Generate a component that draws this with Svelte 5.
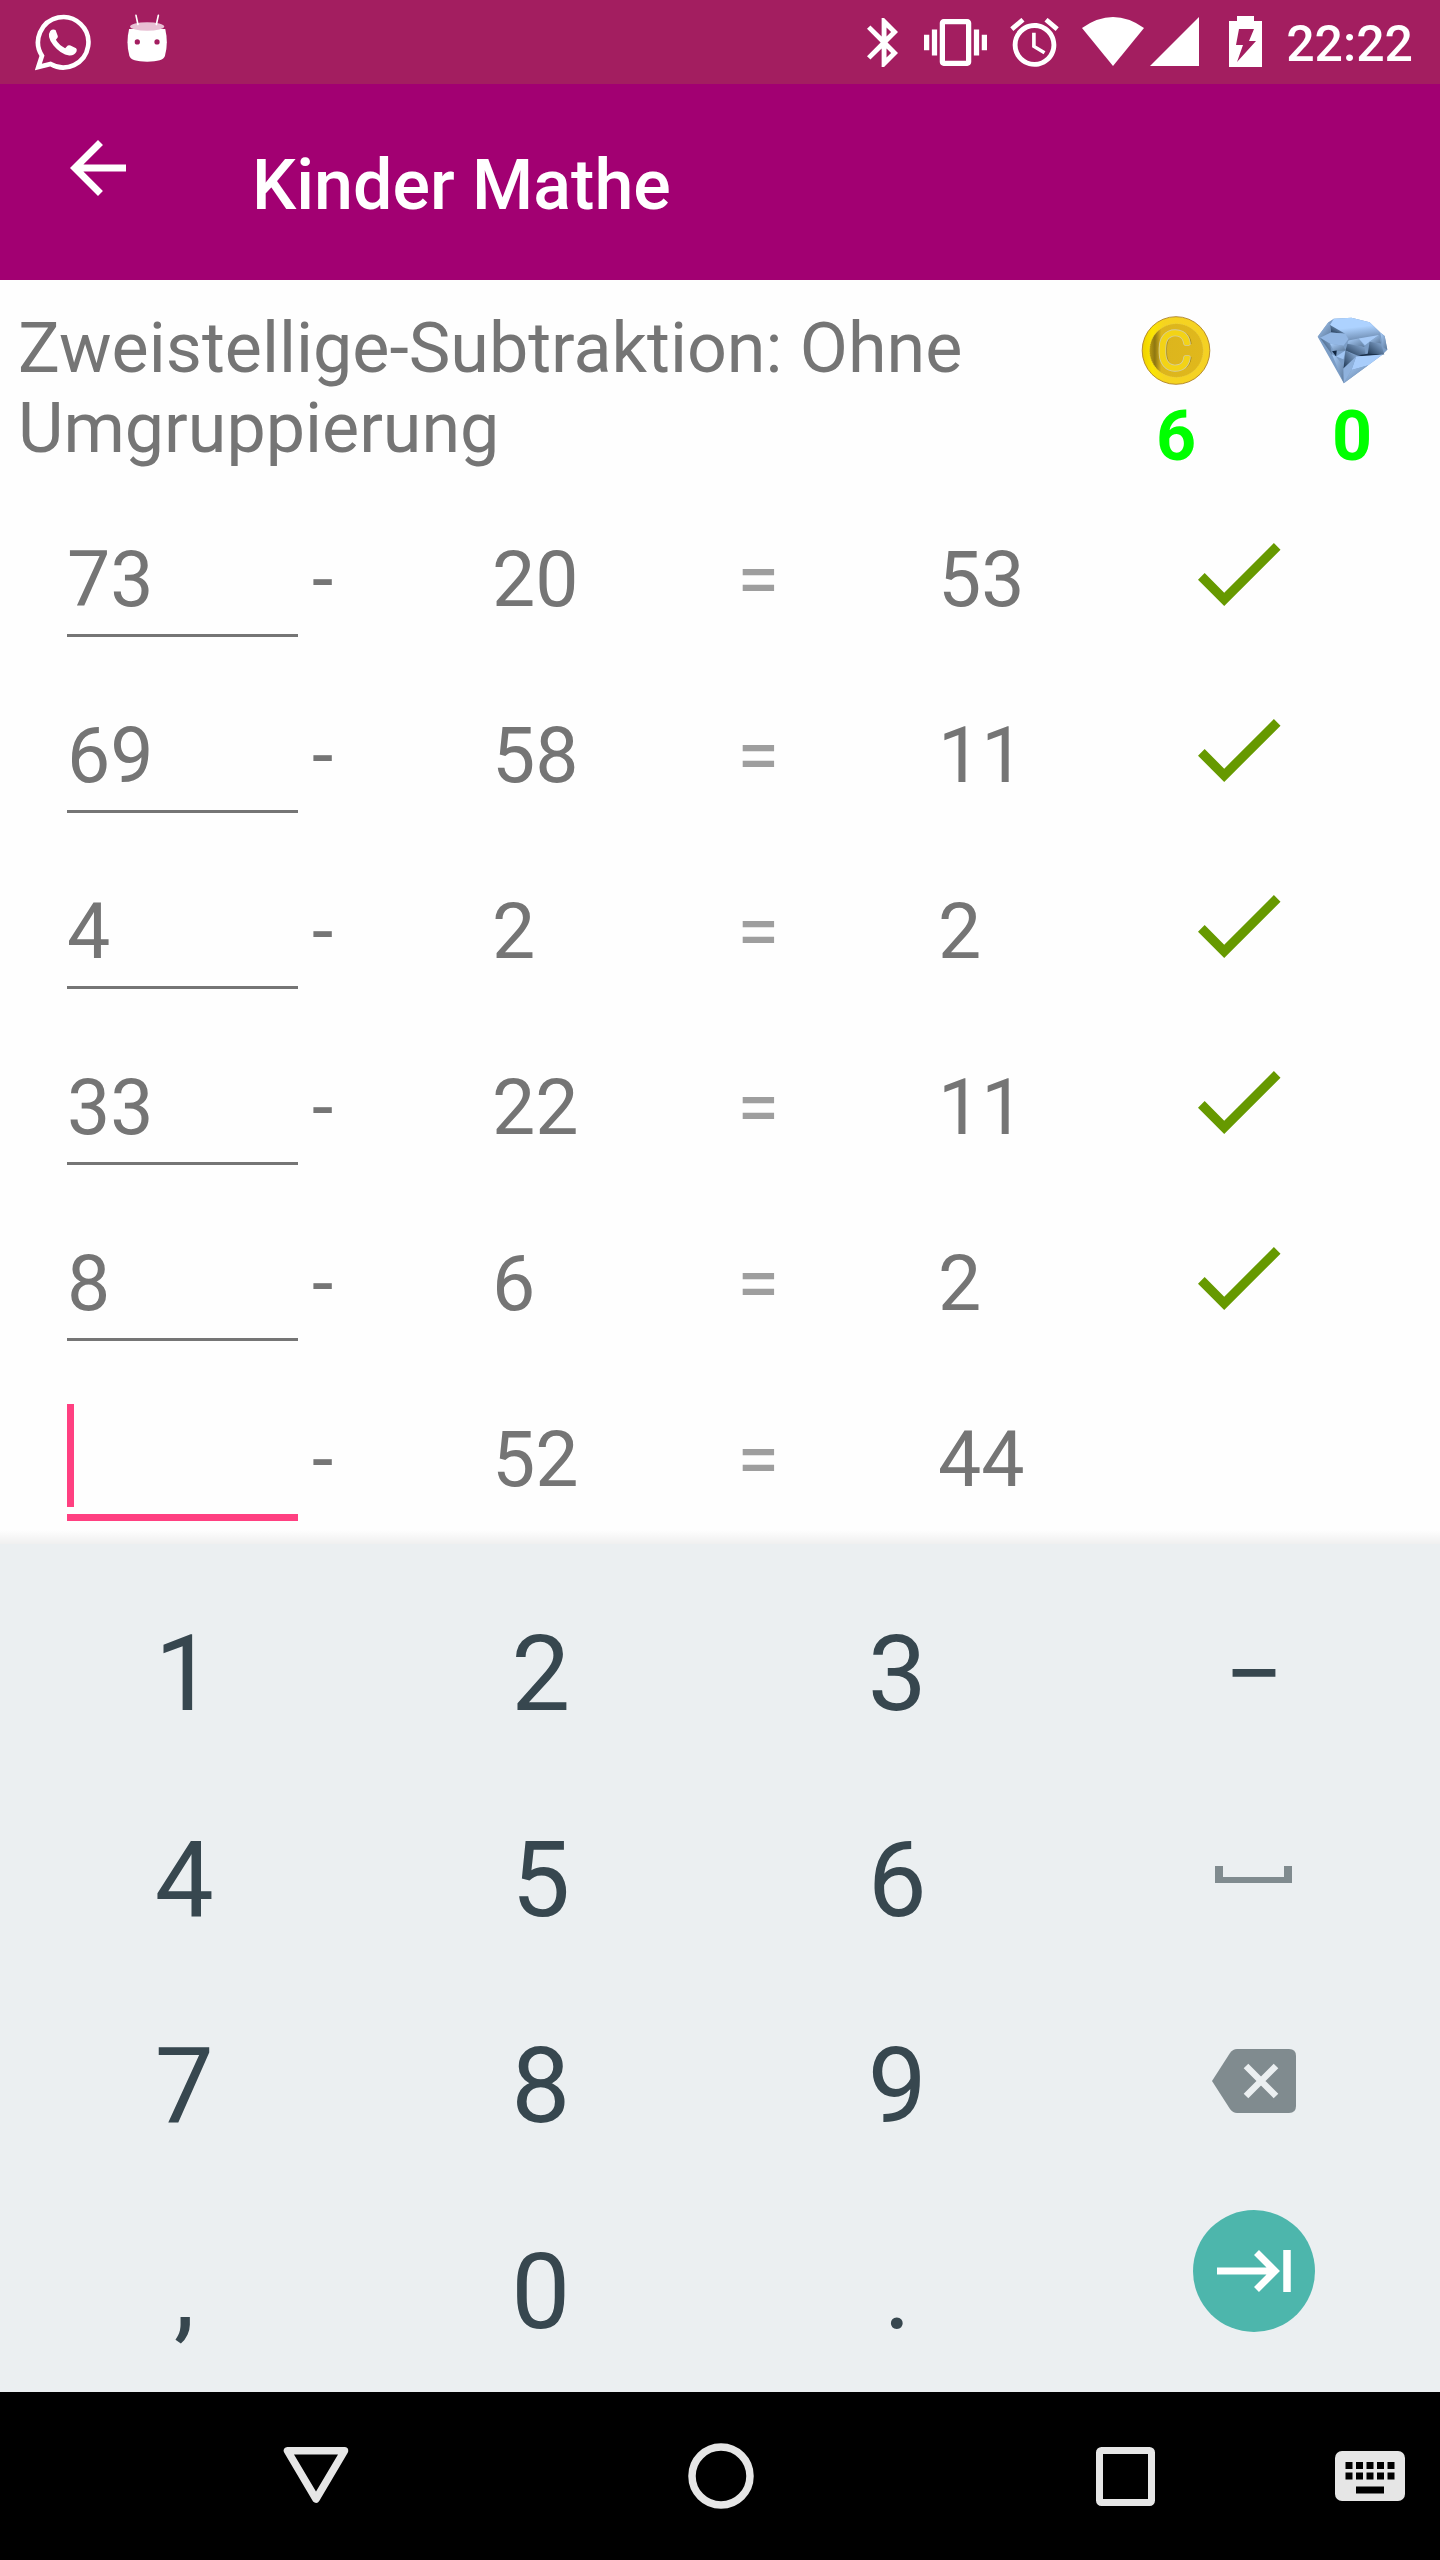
<script lang="ts">
  type Exercise = { left: string; right: string; result: string };

  let exercises = $state<Exercise[]>([
    { left: '73', right: '20', result: '53' },
    { left: '69', right: '58', result: '11' },
    { left: '4', right: '2', result: '2' },
    { left: '33', right: '22', result: '11' },
    { left: '8', right: '6', result: '2' },
    { left: '', right: '52', result: '44' },
  ]);

  let coins = $state(6);
  let diamonds = $state(0);

  const keys = ['1', '2', '3', '−', '4', '5', '6', 'space', '7', '8', '9', 'delete', ',', '0', '.', 'next'];

  // the first exercise without a solution has the focus
  let active = $derived(exercises.findIndex((e) => Number(e.left) - Number(e.right) !== Number(e.result)));

  function press(key: string) {
    const current = exercises[active];
    if (!current) return;
    if (key === 'delete') {
      current.left = current.left.slice(0, -1);
    } else if (/^\d$/.test(key)) {
      current.left += key;
    }
  }
</script>

<div class="screen">
  <div class="status-bar">
    <svg class="whatsapp" viewBox="15 27 169 170">
      <path d="M25 186 L36 152 A76 76 0 1 1 62 177 Z" fill="none" stroke="#fff" stroke-width="14" />
      <path d="M61 77 Q68 70 77 74 L84 93 Q85 97 78 104 Q88 121 106 129 L114 121 Q118 119 122 121 L139 129 Q143 132 140 140 Q134 152 118 151 Q93 148 71 121 Q49 94 61 77 Z" fill="#fff" />
    </svg>
    <svg class="android" viewBox="290 26 121 146">
      <path d="M296 72 Q286 115 297 154 Q302 171 351 171 Q400 171 405 154 Q416 115 406 72 Z" fill="#fff" />
      <ellipse cx="351" cy="64" rx="52" ry="13" fill="#e8c0d4" />
      <path d="M317 30 L323 58 M385 30 L379 58" stroke="#fff" stroke-width="5" stroke-linecap="round" />
      <circle cx="321" cy="111" r="8" fill="#a31e60" />
      <circle cx="381" cy="111" r="8" fill="#a31e60" />
    </svg>

    <div class="status-right">
      <svg class="bluetooth" viewBox="5 2 12.71 20">
        <path d="M17.71 7.71L12 2h-1v7.59L6.41 5 5 6.41 10.59 12 5 17.59 6.41 19 11 14.41V22h1l5.71-5.71-4.3-4.29 4.3-4.29zM13 5.83l1.88 1.88L13 9.59V5.83zm1.88 10.46L13 18.17v-3.76l1.88 1.88z" />
      </svg>
      <svg class="vibrate" viewBox="0 3 24 18" preserveAspectRatio="none">
        <path d="M0 15h2V9H0v6zm3 2h2V7H3v10zm19-8v6h2V9h-2zm-3 8h2V7h-2v10zM16.5 3h-9C6.67 3 6 3.67 6 4.5v15c0 .83.67 1.5 1.5 1.5h9c.83 0 1.500-.67 1.500-1.500v-15c0-.83-.67-1.500-1.500-1.500zM16 19H8V5h8v14z" />
      </svg>
      <svg class="alarm" viewBox="2 1.9 20 20.2">
        <path d="M22 5.72l-4.6-3.86-1.29 1.53 4.6 3.86L22 5.72zM7.88 3.39L6.6 1.86 2 5.71l1.29 1.53 4.59-3.85zM12.5 8H11v6l4.75 2.85.75-1.23-4-2.37V8zM12 4c-4.97 0-9 4.03-9 9s4.02 9 9 9c4.97 0 9-4.03 9-9s-4.03-9-9-9zm0 16c-3.87 0-7-3.13-7-7s3.13-7 7-7 7 3.13 7 7-3.13 7-7 7z" />
      </svg>
      <svg class="wifi" viewBox="0 0 62 49">
        <path d="M31 49 L0 11 Q31 -11 62 11 Z" />
      </svg>
      <svg class="signal" viewBox="0 0 49 49">
        <path d="M49 0 V49 H0 Z" />
      </svg>
      <svg class="battery" viewBox="0 0 33 51">
        <path fill-rule="evenodd" d="M8 0 H25 V5 H33 V51 H0 V5 H8 Z M10 13 L7 29 H14 L8 46 L27 25 H20 L25 13 Z" />
      </svg>
      <span class="clock">22:22</span>
    </div>
  </div>

  <header class="app-bar">
    <svg class="back" viewBox="4 4 16 16">
      <path d="M20 11H7.83l5.59-5.59L12 4l-8 8 8 8 1.41-1.41L7.83 13H20v-2z" fill="#fff" />
    </svg>
    <h1>Kinder Mathe</h1>
  </header>

  <main>
    <div class="task">
      <p>Zweistellige-Subtraktion: Ohne Umgruppierung</p>
      <div class="score">
        <svg class="coin" viewBox="34 34 210 208">
          <defs>
            <linearGradient id="rim">
              <stop offset="0" stop-color="#efd000" />
              <stop offset="0.15" stop-color="#fbe502" />
              <stop offset="0.32" stop-color="#f5d420" />
              <stop offset="1" stop-color="#f5d123" />
            </linearGradient>
            <linearGradient id="shade">
              <stop offset="0" stop-color="#b89a12" />
              <stop offset="0.1" stop-color="#8f7710" />
              <stop offset="0.22" stop-color="#dcb51d" />
              <stop offset="1" stop-color="#e0b81c" />
            </linearGradient>
          </defs>
          <circle cx="139" cy="138" r="102" fill="url(#rim)" stroke="#a87a22" stroke-width="2.500" />
          <circle cx="140" cy="138" r="81" fill="url(#shade)" stroke="#e3cb4c" stroke-width="2" stroke-dasharray="4 3" />
          <text x="91" y="194" class="coin-shadow">C</text>
          <text x="83" y="194" class="coin-edge">C</text>
          <text x="83" y="194" class="coin-letter">C</text>
        </svg>
        <strong>{coins}</strong>
      </div>
      <div class="score">
        <svg class="diamond" viewBox="561 38 212 200">
          <defs>
            <linearGradient id="table" x1="0" y1="0" x2="0.25" y2="1">
              <stop offset="0.5" stop-color="#add2ff" />
              <stop offset="1" stop-color="#7392b8" />
            </linearGradient>
            <linearGradient id="facet" x1="0" y1="0" x2="1" y2="1">
              <stop offset="0" stop-color="#a9cefb" />
              <stop offset="1" stop-color="#5c7899" />
            </linearGradient>
            <linearGradient id="deep" x1="1" y1="0" x2="0" y2="1">
              <stop offset="0" stop-color="#92b5e0" />
              <stop offset="1" stop-color="#1d3550" />
            </linearGradient>
          </defs>
          <path d="M563 97 L595 54 L611 43 L664 40 L718 54 L750 84 L763 95 L771 136 L757 150 L641 236 Z" fill="#7b9dc6" />
          <path d="M611 43 L664 40 L718 54 L750 84 L746 92 L655 110 L600 62 Z" fill="url(#table)" />
          <path d="M600 62 L645 88 L603 84 Z" fill="url(#deep)" />
          <path d="M595 54 L600 62 L603 84 L570 100 L563 97 Z" fill="url(#facet)" />
          <path d="M603 84 L645 88 L655 104 L640 124 L600 118 L570 100 Z" fill="#93b7e4" />
          <path d="M570 100 L600 118 L606 150 Z" fill="url(#deep)" />
          <path d="M600 118 L640 124 L646 138 L612 140 Z" fill="url(#facet)" />
          <path d="M655 108 L685 102 L704 128 L652 118 Z" fill="url(#facet)" />
          <path d="M652 118 L646 138 L684 154 L706 150 L704 128 Z" fill="url(#deep)" />
          <path d="M685 102 L746 92 L718 112 L704 122 Z" fill="#a6caf7" />
          <path d="M746 92 L752 118 L718 112 Z" fill="url(#facet)" />
          <path d="M718 112 L752 118 L762 150 L712 152 Z" fill="url(#deep)" />
          <path d="M750 84 L763 95 L771 136 L758 128 Z" fill="url(#facet)" />
          <path d="M606 140 L620 138 L618 156 Z" fill="#112640" />
          <path d="M684 152 L712 148 L757 150 L700 157 Z" fill="#1b304a" />
          <path d="M618 156 L646 138 L640 164 Z" fill="#a0c5f3" />
          <path d="M606 150 L618 156 L640 186 L641 236 Z" fill="url(#facet)" />
          <path d="M646 138 L678 156 L640 192 Z" fill="url(#deep)" />
          <path d="M678 156 L757 150 L714 182 L664 196 Z" fill="#a8cdfb" />
          <path d="M678 156 L664 196 L641 236 L640 192 Z" fill="#8fb2dd" />
          <path d="M664 196 L714 182 L641 236 Z" fill="url(#facet)" />
        </svg>
        <strong>{diamonds}</strong>
      </div>
    </div>

    <div class="exercises">
      {#each exercises as exercise, i}
        <div class="exercise">
          <div class="field" class:active={i === active}>
            {exercise.left}
            {#if i === active}
              <span class="cursor"></span>
            {/if}
          </div>
          <span>-</span>
          <span>{exercise.right}</span>
          <span class="equals">=</span>
          <span>{exercise.result}</span>
          {#if i !== active}
            <svg class="check" viewBox="3.41 5.59 17.59 13.41">
              <path d="M9 16.17L4.83 12l-1.42 1.41L9 19 21 7l-1.41-1.41z" fill="#669900" />
            </svg>
          {/if}
        </div>
      {/each}
    </div>
  </main>

  <div class="keyboard">
    {#each keys as key}
      <button onclick={() => press(key)} aria-label={key}>
        {#if key === 'space'}
          <svg class="space" viewBox="0 0 77 17">
            <path d="M0 0 H8 V11 H69 V0 H77 V17 H0 Z" fill="#808b8f" />
          </svg>
        {:else if key === 'delete'}
          <svg class="delete" viewBox="0 0 84 64">
            <path d="M25 0 H77 Q84 0 84 7 V57 Q84 64 77 64 H25 Q21 64 18 60 L0 32 L18 4 Q21 0 25 0 Z" fill="#808b8f" />
            <path d="M34 17 L64 47 M64 17 L34 47" stroke="#ebeff1" stroke-width="6.5" />
          </svg>
        {:else if key === 'next'}
          <svg class="next" viewBox="0 0 122 122">
            <circle cx="61" cy="61" r="61" fill="#4db6ac" />
            <path d="M24 61 H80 M63.5 42.5 L82 61 L63.5 79.5" fill="none" stroke="#fff" stroke-width="7" />
            <path d="M94 40 V82" stroke="#fff" stroke-width="7.5" />
          </svg>
        {:else}
          {key}
        {/if}
      </button>
    {/each}
  </div>

  <nav>
    <svg class="nav-back" viewBox="0 0 66 58">
      <path d="M4.5 3.8 H61.5 L33 52 Z" fill="none" stroke="#e6e6e6" stroke-width="7.5" stroke-linejoin="round" />
    </svg>
    <svg class="nav-home" viewBox="0 0 66 66">
      <circle cx="33" cy="33" r="29" fill="none" stroke="#e6e6e6" stroke-width="7.5" />
    </svg>
    <svg class="nav-recent" viewBox="0 0 59 59">
      <rect x="3.5" y="3.5" width="52" height="52" rx="2" fill="none" stroke="#e6e6e6" stroke-width="7" />
    </svg>
    <svg class="nav-keyboard" viewBox="0 0 70 50">
      <rect width="70" height="50" rx="7" fill="#e6e6e6" />
      {#each [11, 21.5] as y}
        {#each [10.5, 21, 31.5, 42, 52.5] as x}
          <rect {x} {y} width="7" height="7" />
        {/each}
      {/each}
      <rect x="21" y="35.5" width="28" height="7" />
    </svg>
  </nav>
</div>

<style>
  :global(body) {
    margin: 0;
  }

  .screen {
    width: 1440px;
    height: 2560px;
    overflow: hidden;
    display: flex;
    flex-direction: column;
    background: #fefefe;
    color: #757575;
    font-family: Roboto, sans-serif;
  }

  svg {
    display: block;
    flex-shrink: 0;
  }

  .status-bar {
    height: 84px;
    box-sizing: border-box;
    padding: 14px 27px 0 35px;
    display: flex;
    align-items: flex-start;
    background: #a31e60;
  }

  .whatsapp {
    width: 56px;
    height: 57px;
  }

  .android {
    width: 40px;
    height: 48px;
    margin-left: 36px;
  }

  .status-right {
    margin-left: auto;
    display: flex;
    align-items: flex-start;
    color: #fff;
    fill: #fff;
  }

  .bluetooth {
    width: 31px;
    height: 49px;
    margin: 4px 26px 0 0;
  }

  .vibrate {
    width: 63px;
    height: 47px;
    margin: 5px 23px 0 0;
  }

  .alarm {
    width: 49px;
    height: 49px;
    margin: 4px 23px 0 0;
  }

  .wifi {
    width: 62px;
    height: 49px;
    margin: 3px 6px 0 0;
  }

  .signal {
    width: 49px;
    height: 49px;
    margin: 3px 30px 0 0;
  }

  .battery {
    width: 33px;
    height: 51px;
    margin: 2px 24px 0 0;
  }

  .clock {
    font-size: 50px;
    font-weight: 500;
    line-height: 60px;
  }

  .app-bar {
    height: 196px;
    box-sizing: border-box;
    padding-left: 70px;
    display: flex;
    background: #a20072;
  }

  .back {
    width: 56px;
    height: 56px;
    margin-top: 56px;
  }

  h1 {
    margin: 61px 0 0 126px;
    color: #fff;
    font-size: 70px;
    font-weight: 500;
    line-height: 80px;
  }

  main {
    height: 1264px;
    box-sizing: border-box;
    padding-top: 28px;
    overflow: hidden;
    position: relative;
  }

  /* shadow above the keyboard */
  main::after {
    content: '';
    position: absolute;
    inset: auto 0 0;
    height: 14px;
    background: linear-gradient(rgba(0, 0, 0, 0), rgba(0, 0, 0, 0.06));
  }

  .task {
    height: 202px;
    padding-left: 18px;
    display: flex;
  }

  .task p {
    width: 1070px;
    margin: 0;
    font-size: 70px;
    line-height: 80px;
  }

  .score {
    width: 176px;
    display: flex;
    flex-direction: column;
    align-items: center;
  }

  .coin {
    width: 70px;
    height: 69px;
    margin-top: 8px;
  }

  .diamond {
    width: 71px;
    height: 67px;
    margin: 9px 0 1px;
  }

  .score strong {
    margin-top: 11px;
    color: #00ff00;
    font-size: 70px;
    font-weight: 700;
    line-height: 80px;
  }

  .coin text {
    font-size: 158px;
    font-weight: 300;
    stroke-linejoin: round;
  }

  .coin-shadow {
    fill: #ab8c16;
    stroke: #ab8c16;
    stroke-width: 3px;
  }

  .coin-edge {
    fill: #d6cf9c;
    stroke: #d6cf9c;
    stroke-width: 13px;
  }

  .coin-letter {
    fill: #f3d316;
    stroke: #f3d316;
    stroke-width: 8px;
  }

  .exercise {
    height: 176px;
    box-sizing: border-box;
    padding: 25px 0 0 67px;
    display: grid;
    grid-template-columns: 245px 180px 245px 201px 260px 83px;
    align-items: start;
    font-size: 77px;
    line-height: 90px;
  }

  .field {
    position: relative;
    width: 231px;
    height: 99px;
    border-bottom: 3px solid #757575;
  }

  .field.active {
    border-bottom: 7px solid #ff4081;
  }

  .cursor {
    position: absolute;
    top: -11px;
    left: 0;
    width: 7px;
    height: 103px;
    background: #ff4081;
  }

  .equals {
    color: #9e9e9e;
  }

  .check {
    width: 82.5px;
    height: 63px;
    margin-top: 8px;
  }

  .keyboard {
    height: 848px;
    box-sizing: border-box;
    padding: 69px 6px 0 6px;
    display: grid;
    grid-template-columns: repeat(4, 356.5px);
    grid-auto-rows: 206px;
    background: #ebeff1;
  }

  .keyboard button {
    padding: 0;
    border: none;
    background: none;
    display: flex;
    justify-content: center;
    align-items: flex-start;
    color: #37474f;
    font: 400 105px/124px Roboto, sans-serif;
  }

  .space {
    width: 77px;
    height: 17px;
    margin-top: 47px;
  }

  .delete {
    width: 84px;
    height: 64px;
    margin-top: 24px;
  }

  .next {
    width: 122px;
    height: 122px;
    margin-top: -21px;
  }

  nav {
    height: 168px;
    padding-left: 283px;
    display: flex;
    align-items: center;
    background: #000;
  }

  .nav-back {
    width: 66px;
    height: 58px;
  }

  .nav-home {
    width: 66px;
    height: 66px;
    margin-left: 339px;
  }

  .nav-recent {
    width: 59px;
    height: 59px;
    margin-left: 342px;
  }

  .nav-keyboard {
    width: 70px;
    height: 50px;
    margin-left: 180px;
  }
</style>
